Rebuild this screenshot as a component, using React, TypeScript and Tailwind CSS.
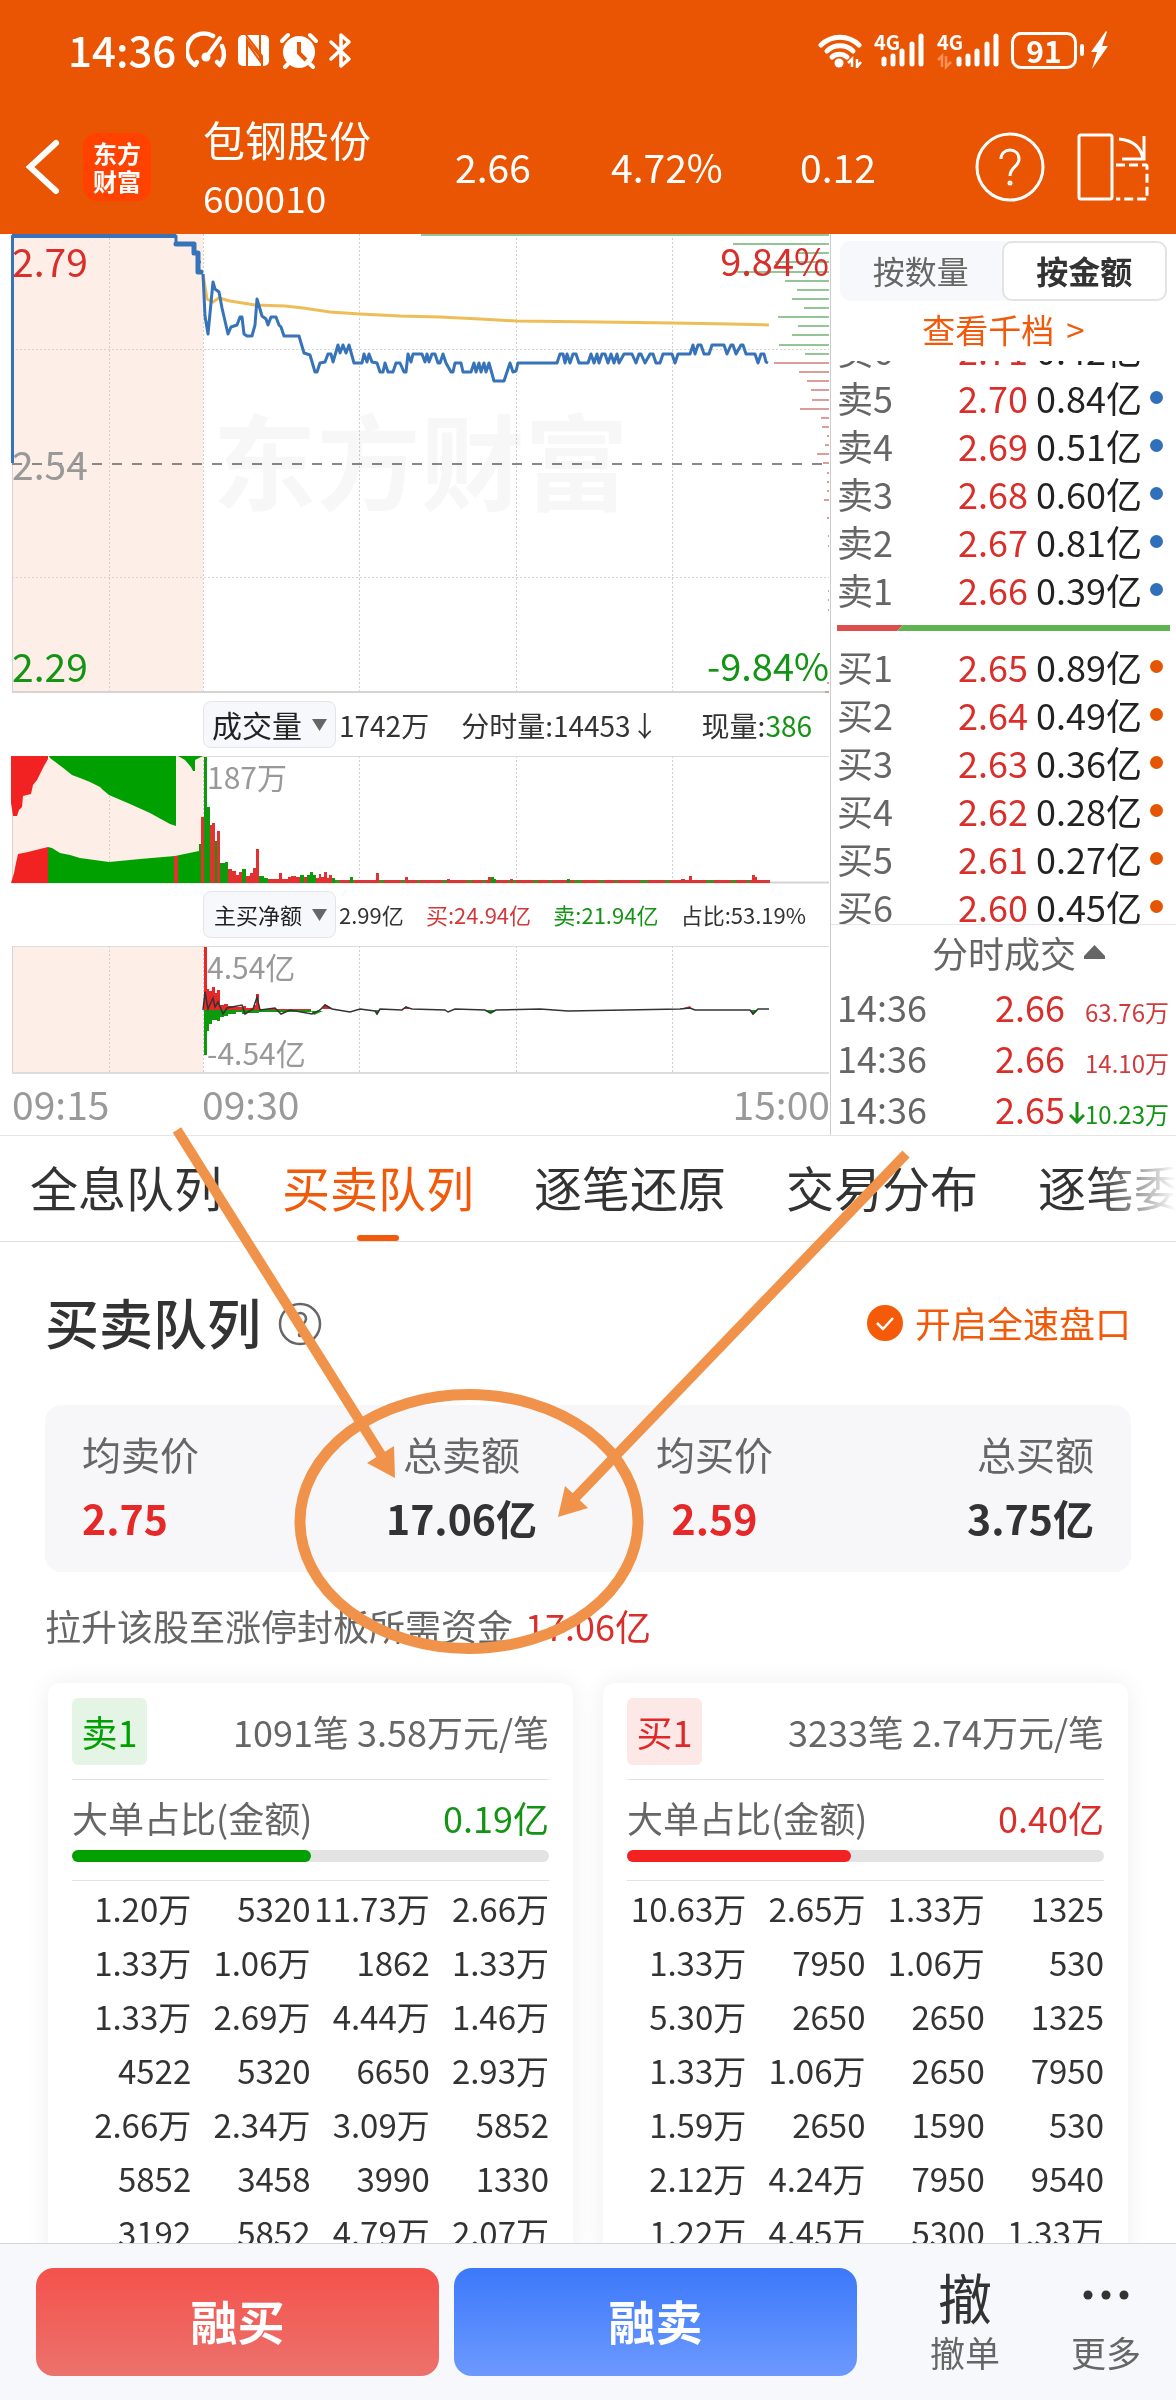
import { useState } from "react";

interface Level {
  label: string;
  price: string;
  amount: string;
}

interface Trade {
  time: string;
  price: string;
  amount: string;
  down?: boolean;
}

const sells: Level[] = [
  { label: "卖6", price: "2.71", amount: "0.42亿" },
  { label: "卖5", price: "2.70", amount: "0.84亿" },
  { label: "卖4", price: "2.69", amount: "0.51亿" },
  { label: "卖3", price: "2.68", amount: "0.60亿" },
  { label: "卖2", price: "2.67", amount: "0.81亿" },
  { label: "卖1", price: "2.66", amount: "0.39亿" },
];

const buys: Level[] = [
  { label: "买1", price: "2.65", amount: "0.89亿" },
  { label: "买2", price: "2.64", amount: "0.49亿" },
  { label: "买3", price: "2.63", amount: "0.36亿" },
  { label: "买4", price: "2.62", amount: "0.28亿" },
  { label: "买5", price: "2.61", amount: "0.27亿" },
  { label: "买6", price: "2.60", amount: "0.45亿" },
];

const trades: Trade[] = [
  { time: "14:36", price: "2.66", amount: "63.76万" },
  { time: "14:36", price: "2.66", amount: "14.10万" },
  { time: "14:36", price: "2.65", amount: "10.23万", down: true },
];

const tabs = ["全息队列", "买卖队列", "逐笔还原", "交易分布", "逐笔委托"];

const sellOrders = [
  ["1.20万", "5320", "11.73万", "2.66万"],
  ["1.33万", "1.06万", "1862", "1.33万"],
  ["1.33万", "2.69万", "4.44万", "1.46万"],
  ["4522", "5320", "6650", "2.93万"],
  ["2.66万", "2.34万", "3.09万", "5852"],
  ["5852", "3458", "3990", "1330"],
  ["3192", "5852", "4.79万", "2.07万"],
];

const buyOrders = [
  ["10.63万", "2.65万", "1.33万", "1325"],
  ["1.33万", "7950", "1.06万", "530"],
  ["5.30万", "2650", "2650", "1325"],
  ["1.33万", "1.06万", "2650", "7950"],
  ["1.59万", "2650", "1590", "530"],
  ["2.12万", "4.24万", "7950", "9540"],
  ["1.22万", "4.45万", "5300", "1.33万"],
];

const pricePoints =
  "203,275 205,317 208,335 213,283 215,290 219,293 222,309 228,335 231,328 237,326 240,318 242,318 244,335 247,337 252,337 255,326 257,300 262,317 266,320 268,326 271,318 276,318 279,326 281,328 284,337 299,337 304,354 310,356 315,373 317,373 320,364 325,363 328,355 331,355 333,363 338,346 340,354 343,346 346,354 349,346 354,364 362,364 364,355 367,363 369,355 372,363 377,364 380,373 383,373 385,364 388,373 393,373 396,364 400,364 404,373 406,373 408,355 411,363 413,355 422,355 425,363 427,355 429,363 432,355 435,355 438,364 440,364 443,355 446,364 451,373 453,373 455,364 461,364 463,373 471,373 474,364 476,373 479,364 481,373 484,364 486,373 489,364 494,382 504,382 510,364 513,373 516,372 518,364 557,364 560,355 563,355 565,364 567,355 570,364 573,355 576,355 579,364 588,364 591,355 594,364 597,355 599,364 602,355 605,355 608,364 611,355 614,364 617,355 619,364 624,355 632,355 636,364 639,355 641,355 645,364 650,355 653,355 656,364 660,364 663,355 672,355 675,364 678,355 690,355 693,346 695,355 698,346 701,346 704,355 709,355 712,346 724,346 727,355 731,346 733,346 736,355 741,346 743,346 746,355 755,355 758,364 761,355 764,355 766,363 768,364";

const averagePoints =
  "203,275 207,300 213,303 219,299 230,302 255,306 285,307 303,309 330,313 360,315 400,317 440,318 480,320 516,322 600,323 672,324 730,325 769,326";

// price distribution at the right edge: [y, start x]
const lossBars = [
  [236, 421], [245, 733], [254, 797], [263, 775], [273, 737], [282, 785], [291, 797],
  [300, 792], [309, 804], [318, 778], [327, 798], [336, 792], [346, 779], [355, 805],
];
const profitBars = [
  [364, 774], [373, 799], [382, 807], [391, 811], [401, 812], [410, 800], [419, 821],
  [428, 822], [437, 827], [446, 825], [455, 817], [464, 823], [474, 827], [483, 827],
  [492, 827], [501, 824], [519, 827], [537, 828], [547, 828], [592, 828], [601, 828],
  [611, 828], [684, 827], [693, 825],
];

// volume bars: [x, width, top, up]
const volumeBars: [number, number, number, boolean][] = [
  [174, 4, 856, true], [201, 3, 817, true], [204, 3, 757, false], [207, 3, 807, false],
  [210, 2, 825, true], [212, 3, 823, true], [215, 2, 841, false], [217, 3, 831, true],
  [220, 5, 863, false], [225, 3, 862, false], [228, 4, 869, true], [232, 4, 871, true],
  [236, 3, 875, true], [239, 3, 872, true], [242, 4, 869, false], [246, 4, 876, true],
  [250, 3, 873, true], [253, 3, 868, true], [256, 3, 849, true], [259, 5, 876, false],
  [264, 4, 878, false], [268, 11, 879, true], [279, 3, 873, true], [282, 6, 879, true],
  [288, 3, 877, true], [291, 5, 876, true], [296, 4, 877, true], [300, 4, 875, false],
  [304, 3, 877, true], [307, 3, 875, false], [310, 3, 872, false], [313, 3, 875, false],
  [316, 3, 878, true], [319, 2, 874, true], [321, 3, 877, true], [324, 3, 872, true],
  [327, 2, 878, true], [329, 3, 875, true], [332, 3, 878, false], [350, 3, 877, false],
  [376, 3, 873, true], [405, 3, 877, true], [447, 3, 879, true], [488, 3, 877, true],
  [491, 3, 877, false], [494, 2, 879, false], [510, 3, 879, true], [567, 3, 879, false],
  [681, 4, 879, true], [689, 3, 876, true], [752, 3, 875, true], [755, 2, 877, true],
];

// active buy and sell amounts per minute: [x, width, top, bottom]
const netBars = [
  [204, 3, 947, 1055], [207, 2, 989, 1031], [209, 3, 991, 1024], [212, 3, 987, 1020],
  [215, 2, 993, 1020], [217, 3, 990, 1021], [220, 4, 1005, 1017], [224, 4, 1004, 1016],
  [228, 8, 1006, 1014], [236, 6, 1007, 1012], [242, 4, 1006, 1014], [246, 8, 1008, 1013],
  [254, 2, 1005, 1013], [256, 3, 994, 1013], [259, 12, 1009, 1012], [271, 40, 1009, 1012],
];

const netLine =
  "203,1010 205,992 208,1009 213,998 215,1007 218,1002 223,1014 227,1008 242,1005 245,1014 253,1009 257,997 260,1010 275,1008 281,1014 290,1010 312,1014 320,1010 325,1005 332,1009 350,1012 360,1009 375,1011 377,1014 380,1009 402,1010 406,1007 412,1009 445,1010 448,1012 455,1009 485,1010 490,1013 496,1010 540,1009 568,1011 625,1010 680,1009 690,1008 695,1010 750,1010 753,1014 758,1009 769,1009";

function TimeGrid({ top, bottom }: { top: number; bottom: number }) {
  return (
    <>
      <rect x="12" y={top} width="191" height={bottom - top} fill="#fdeee7" />
      <g stroke="#cfcfcf" strokeDasharray="2 2">
        {[109, 203, 359, 516, 672].map((x) => (
          <path key={x} d={`M${x}.5 ${top}V${bottom}`} />
        ))}
      </g>
      <path d={`M12.5 ${top}V${bottom}`} stroke="#d4d4d4" />
    </>
  );
}

function PriceChart() {
  return (
    <div className="relative mr-px ml-3 h-[459px]">
      <span className="absolute inset-x-0 top-[152px] text-center text-[104px] leading-[144px] font-bold text-[#f7f7f7]">
        东方财富
      </span>
      <svg
        className="absolute inset-0 h-full w-full overflow-visible mix-blend-multiply"
        viewBox="12 235 817 459"
        preserveAspectRatio="none"
        fill="none"
      >
        <TimeGrid top={235} bottom={693} />
        <path d="M12 350.5H829M12 578.5H829" stroke="#d4d4d4" strokeDasharray="2 2" />
        <path d="M12 465H829" stroke="#888" strokeWidth="2" strokeDasharray="10 10" />
        <path d="M12 693H829" stroke="#d4d4d4" strokeWidth="2" />
        {lossBars.map(([y, x]) => (
          <path key={y} d={`M${x} ${y}H829`} stroke="#93c596" strokeWidth="2" />
        ))}
        {profitBars.map(([y, x]) => (
          <path key={y} d={`M${x} ${y}H829`} stroke="#dd9b99" strokeWidth="2" />
        ))}
        <polyline points={averagePoints} stroke="#efbd58" strokeWidth="3" />
        <g stroke="#3673b8" strokeLinejoin="round">
          <path d="M12.5 464V237H176V245" strokeWidth="3" />
          <path d="M12 237H176" strokeWidth="4" />
          <path
            d="M176 245H193M194 245V254M194 254H198M198 254V273M198 263H198.5M199 273H201"
            strokeWidth="5"
            strokeLinecap="round"
          />
          <polyline points={pricePoints} strokeWidth="3" />
        </g>
      </svg>
      <span className="absolute top-[3px] left-0 text-[39px] leading-[46px] text-[#d92e2a]">2.79</span>
      <span className="absolute top-[206px] left-0 text-[39px] leading-[46px] text-[#999]">2.54</span>
      <span className="absolute top-[408px] left-0 text-[39px] leading-[46px] text-[#149414]">2.29</span>
      <span className="absolute top-[3px] right-0 text-[38px] leading-[46px] text-[#d92e2a]">9.84%</span>
      <span className="absolute top-[408px] right-0 text-[38px] leading-[46px] text-[#149414]">-9.84%</span>
    </div>
  );
}

function VolumeChart() {
  return (
    <div className="relative mr-px ml-3 h-[127px]">
      <svg
        className="absolute inset-0 h-full w-full overflow-visible"
        viewBox="12 756 817 127"
        preserveAspectRatio="none"
        fill="none"
      >
        <TimeGrid top={756} bottom={882} />
        <path d="M12 756.5H829" stroke="#dcdcdc" />
        <path d="M12 882.5H829" stroke="#d4d4d4" strokeWidth="2" />
        <g fill="#f22222">
          <path d="M11 756H48V759L44 766 40 774 37 780 33 785 31 794 23 796 22 807 19 810 17 816 13 816 11 803Z" />
          <path d="M11 883L14 873 16 863 18 854 28 852 48 847V883Z" />
        </g>
        <g fill="#00a000">
          <path d="M49 756H176V826L170 824 150 813 130 804 109 795 103 790 100 787 90 782 80 778 72 775 62 767 58 764 50 758Z" />
          <path d="M178 756H203L199 758 195 760V771H193L191 767 185 760Z" />
          <path d="M48 847L52 848 60 853 70 855 80 858 109 862 140 859 175 856 199 851V844H201V883H48Z" />
        </g>
        <path d="M204 881.5H770" stroke="#d93636" strokeWidth="3" />
        <path d="M335 881.5H770" stroke="#4c8a1c" strokeWidth="3" strokeDasharray="5 11 3 22 8 17" />
        {volumeBars.map(([x, w, top, up]) => (
          <rect key={x} x={x} y={top} width={w} height={883 - top} fill={up ? "#e33030" : "#0d9a0d"} />
        ))}
      </svg>
      <span className="absolute top-0.5 left-[195px] text-[30px] leading-9 text-[#999]">187万</span>
    </div>
  );
}

function NetChart() {
  return (
    <div className="relative mr-px ml-3 h-[127px]">
      <svg
        className="absolute inset-0 h-full w-full overflow-visible"
        viewBox="12 946 817 127"
        preserveAspectRatio="none"
        fill="none"
      >
        <TimeGrid top={946} bottom={1073} />
        <path d="M12 946.5H829" stroke="#dcdcdc" />
        <path d="M12 1073H829" stroke="#dcdcdc" strokeWidth="2" />
        {netBars.map(([x, w, top, bottom]) => (
          <g key={x}>
            <rect x={x} y={top} width={w} height={1010 - top} fill="#e62828" />
            <rect x={x} y="1010" width={w} height={bottom - 1010} fill="#0d9a0d" />
          </g>
        ))}
        <path d="M322 1009L325 1004 333 1009ZM402 1009L406 1006 410 1009ZM680 1009L690 1006 692 1009Z" fill="#e62828" />
        <path d="M311 1011H323L314 1015ZM375 1010L377 1015 380 1010ZM486 1010L491 1014 497 1010ZM750 1010L753 1015 758 1010Z" fill="#0d9a0d" />
        <polyline points={netLine} stroke="#333" strokeWidth="1.5" />
      </svg>
      <span className="absolute top-0.5 left-[195px] text-[30px] leading-9 text-[#999]">4.54亿</span>
      <span className="absolute top-[88px] left-[195px] text-[30px] leading-9 text-[#999]">-4.54亿</span>
    </div>
  );
}

function IndicatorSelect({ name, small }: { name: string; small?: boolean }) {
  return (
    <div className="relative ml-[203px] h-[47px] w-[133px] shrink-0">
      <select
        aria-label={name}
        className={`h-full w-full appearance-none rounded-lg border border-[#e3e5e9] bg-[#f7f8fb] text-[#222] ${
          small ? "pl-[10px] text-[22px]" : "pl-2 text-[30px]"
        }`}
      >
        <option>{name}</option>
      </select>
      <svg className="pointer-events-none absolute top-[18px] right-[9px]" width="15" height="12">
        <path d="M0 0H15L7.5 12Z" fill="#666" />
      </svg>
    </div>
  );
}

function LevelRow({ level, dot }: { level: Level; dot: string }) {
  return (
    <li className="flex h-12 shrink-0 items-center pr-[13px] pl-[6px] text-[36px] leading-[44px] text-[#222]">
      <span className="flex-1 text-[#666]">{level.label}</span>
      <span className="text-[#d92e2a]">{level.price}</span>
      <span className="ml-2">{level.amount}</span>
      <i className={`ml-2 size-[13px] rounded-full ${dot}`} />
    </li>
  );
}

function OrderBook() {
  const [mode, setMode] = useState("按金额");

  return (
    <aside className="flex h-[901px] w-[346px] shrink-0 flex-col border-l border-[#ccc]">
      <div className="mx-[9px] mt-[7px] flex h-[60px] rounded-[10px] bg-[#f7f8fb]">
        {["按数量", "按金额"].map((item) => (
          <button
            key={item}
            onClick={() => setMode(item)}
            className={`flex-1 rounded-[10px] pb-0.5 text-[32px] leading-10 ${
              mode === item ? "border-2 border-[#e3e3e3] bg-white font-bold text-[#333]" : "text-[#666]"
            }`}
          >
            {item}
          </button>
        ))}
      </div>
      <a href="#levels" className="mt-2 flex justify-center gap-3 text-[33px] leading-10 text-[#f05a0a]">
        <span>查看千档</span>
        <span>&gt;</span>
      </a>
      <ul className="mt-3 flex h-[252px] flex-col justify-end overflow-hidden">
        {sells.map((level) => (
          <LevelRow key={level.label} level={level} dot="bg-[#3070bb]" />
        ))}
      </ul>
      <svg className="mx-[6px] mt-3 h-[6px] shrink-0" viewBox="0 0 333 6" preserveAspectRatio="none">
        <path d="M0 0H66L60 6H0Z" fill="#dd4f4c" />
        <path d="M66 0H333V6H60Z" fill="#5fb450" />
      </svg>
      <ul className="mt-[11px] flex h-[283px] flex-col overflow-hidden border-b border-[#e6e6e6]">
        {buys.map((level) => (
          <LevelRow key={level.label} level={level} dot="bg-[#e65503]" />
        ))}
      </ul>
      <button className="flex h-[56px] items-center justify-center gap-2 pb-0.5 pl-[30px] text-[36px] leading-[44px] text-[#666]">
        分时成交
        <svg width="21" height="14">
          <path d="M10.5 0L21 11V14H0V11Z" fill="#666" />
        </svg>
      </button>
      <ul>
        {trades.map((trade, i) => (
          <li key={i} className="flex h-[51px] items-baseline pr-[7px] pl-[6px] text-[36px] leading-[51px]">
            <span className="flex-1 text-[#666]">{trade.time}</span>
            <span className="text-[#d92e2a]">{trade.price}</span>
            <span
              className={`flex w-[104px] items-baseline justify-end text-[24px] ${
                trade.down ? "text-[#149414]" : "text-[#d03a3a]"
              }`}
            >
              {trade.down && (
                <svg width="16" height="22" fill="none" stroke="currentColor" strokeWidth="3">
                  <path d="M8 0V20M1 13L8 20 15 13" />
                </svg>
              )}
              {trade.amount}
            </span>
          </li>
        ))}
      </ul>
    </aside>
  );
}

function SignalBars({ faded }: { faded?: boolean }) {
  return (
    <svg
      className="overflow-visible"
      width={faded ? 64 : 51}
      height="36"
      viewBox={faded ? "0 0 64 36" : "0 0 51 36"}
    >
      <text x="0" y="18" fontSize="20" fontWeight="700" fill="#fff">
        4G
      </text>
      <g stroke="#fff" strokeWidth="5" strokeLinecap="round">
        {faded ? (
          <path d="M22 32V27M31 32V24M40 32V19M50 32V12M59 32V4" />
        ) : (
          <path d="M10 32V27M19 32V24M28 32V19M38 32V12M47 32V4" />
        )}
      </g>
      {faded && (
        <path d="M1 28L5 24V35M9 24V35L14 30" fill="none" stroke="#ff8f57" strokeWidth="2.5" />
      )}
    </svg>
  );
}

function StatusBar() {
  return (
    <div className="flex h-[100px] items-center px-[68px] text-white">
      <span className="pb-0.5 text-[42px] leading-[56px] font-medium">14:36</span>
      <svg className="ml-[10px]" width="166" height="38" viewBox="0 0 166 38" fill="none">
        <g stroke="#fff" strokeWidth="4.5" strokeLinecap="round">
          <path d="M9 34A17 17 0 0 1 27 5" />
          <path d="M36 15A17 17 0 0 1 34 34M9 34L11 31M34 34L31 31" />
          <path d="M21 25L34 7" strokeWidth="4" />
        </g>
        <circle cx="20" cy="26" r="4.5" fill="#fff" />
        <rect x="52" y="4" width="31" height="31" rx="5" fill="#fff" />
        <path d="M61 35V9L75 27M74 4V30L61 12M60 4L76 25V35" stroke="#e95503" strokeWidth="2" />
        <circle cx="113" cy="21" r="16" fill="#fff" />
        <path d="M96 10L102 4M130 10L124 4M102 33L99 36M124 33L127 36" stroke="#fff" strokeWidth="4" strokeLinecap="round" />
        <path d="M113 11V22L120 29" stroke="#e95503" strokeWidth="4" />
        <path d="M145 11L163 28 155 35V4L163 11 145 28" stroke="#fff" strokeWidth="3.5" strokeLinejoin="round" strokeLinecap="round" />
      </svg>
      <svg className="ml-auto" width="44" height="36" viewBox="0 0 44 36" fill="none">
        <g stroke="#fff" strokeWidth="5" strokeLinecap="round">
          <path d="M3 13A27 27 0 0 1 41 13" />
          <path d="M9 19A19 19 0 0 1 35 19" />
          <path d="M14 25A12 12 0 0 1 29 25" />
        </g>
        <circle cx="21" cy="31" r="4.5" fill="#fff" />
        <path d="M30 31L34 27V35M39 27V35L43 30" stroke="#fff" strokeWidth="2.5" />
      </svg>
      <div className="ml-3 flex items-center gap-3">
        <SignalBars />
        <SignalBars faded />
      </div>
      <div className="ml-[10px] flex h-[37px] w-[66px] items-center justify-center rounded-[10px] border-3 border-white text-[30px] leading-[30px] font-bold">
        91
      </div>
      <span className="ml-[3px] h-3 w-1 rounded-sm bg-white" />
      <svg className="ml-[7px]" width="17" height="38">
        <path d="M15 0L0 21H6L1 38 17 15H11L16 1Z" fill="#fff" />
      </svg>
    </div>
  );
}

function StockHeader() {
  return (
    <div className="flex h-[134px] items-center pr-[26px] pl-[25px] text-white">
      <button aria-label="返回">
        <svg width="36" height="58" viewBox="0 0 36 58" fill="none" stroke="#fff" strokeWidth="6" strokeLinecap="round">
          <path d="M31 5L5 29 31 53" />
        </svg>
      </button>
      <div className="ml-[22px] flex size-[68px] flex-col items-center justify-center rounded-[14px] bg-[#ff4200] text-[24px] leading-7 font-bold">
        <span>东方</span>
        <span>财富</span>
      </div>
      <div className="ml-[52px] w-[252px] pt-0.5">
        <h1 className="text-[42px] leading-[58px]">包钢股份</h1>
        <p className="text-[37px] leading-[58px]">600010</p>
      </div>
      <span className="w-[156px] pb-0.5 text-[39px]">2.66</span>
      <span className="w-[189px] pb-0.5 text-[39px]">4.72%</span>
      <span className="pb-0.5 text-[39px]">0.12</span>
      <button aria-label="帮助" className="ml-auto">
        <svg width="70" height="70" viewBox="0 0 70 70" fill="none" stroke="#fff" strokeWidth="3">
          <circle cx="35" cy="35" r="33" />
          <path d="M26 27C26 15 44 15 44 27C44 35 35 35 35 44" />
          <circle cx="35" cy="51" r="1" />
        </svg>
      </button>
      <button aria-label="横屏" className="ml-8">
        <svg width="73" height="68" viewBox="0 0 73 68" fill="none" stroke="#fff" strokeWidth="3">
          <rect x="2" y="2" width="33" height="64" rx="2" />
          <path d="M42 6Q63 8 66 26M67 3V26H45" />
          <path d="M39 32H69Q70 32 70 34V66H39" strokeDasharray="9 4" />
        </svg>
      </button>
    </div>
  );
}

function QueueCard({
  side,
  summary,
  amount,
  ratio,
  orders,
}: {
  side: string;
  summary: string;
  amount: string;
  ratio: number;
  orders: string[][];
}) {
  const isSell = side.startsWith("卖");

  return (
    <section className="flex-1 rounded-xl bg-white px-6 pt-[15px] shadow-[0_0_24px_rgba(0,0,0,0.07)]">
      <div className="flex h-[82px] items-start justify-between border-b border-[#e3e3e3]">
        <span
          className={`flex h-[67px] w-[75px] items-center justify-center rounded-md pb-0.5 text-[36px] ${
            isSell ? "bg-[#e5f5e5] text-[#00a000]" : "bg-[#fde8e8] text-[#e02828]"
          }`}
        >
          {side}
        </span>
        <span className="text-[36px] leading-[66px] text-[#666]">{summary}</span>
      </div>
      <div className="border-b border-[#e3e3e3] pt-[10px] pb-[18px]">
        <div className="flex justify-between text-[36px] leading-[54px]">
          <span className="text-[#666]">大单占比(金额)</span>
          <span className={isSell ? "text-[#149414]" : "text-[#d92e2a]"}>{amount}</span>
        </div>
        <div className="mt-[6px] h-3 rounded-full bg-[#e3e3e3]">
          <div
            className={`h-full rounded-full ${isSell ? "bg-[#00a000]" : "bg-[#f22222]"}`}
            style={{ width: `${ratio}%` }}
          />
        </div>
      </div>
      <table className="w-full table-fixed text-right text-[33px] leading-[54px] text-[#333]">
        <tbody>
          {orders.map((row, i) => (
            <tr key={i} className="h-[54px]">
              {row.map((cell, j) => (
                <td key={j} className="p-0 whitespace-nowrap">
                  {cell}
                </td>
              ))}
            </tr>
          ))}
        </tbody>
      </table>
    </section>
  );
}

// hand-drawn marks pointing at the total sell amount
function Annotation() {
  return (
    <svg
      className="pointer-events-none absolute inset-x-0 top-[893px] h-[540px] w-full"
      viewBox="0 1127 1176 540"
      preserveAspectRatio="none"
      fill="none"
      stroke="#f0924a"
      strokeWidth="10"
    >
      <ellipse cx="469" cy="1521.5" rx="169" ry="127" strokeWidth="11" />
      <path d="M177 1130L383 1458" />
      <path d="M906 1154L575 1498" />
      <path d="M395 1478L367 1463 394 1446ZM558 1517L565 1486 588 1508Z" fill="#f0924a" stroke="none" />
    </svg>
  );
}

export default function App() {
  const [tab, setTab] = useState("买卖队列");

  return (
    <div className="flex h-screen flex-col bg-white font-['Noto_Sans_CJK_SC',sans-serif]">
      <header className="shrink-0 bg-[#e95503]">
        <StatusBar />
        <StockHeader />
      </header>

      <main className="relative min-h-0 flex-1 overflow-y-auto [scrollbar-width:none]">
        <div className="flex border-b border-[#e4e4e4]">
          <div className="min-w-0 flex-1">
            <PriceChart />
            <div className="flex h-[63px] items-center text-[28px] whitespace-nowrap text-[#333]">
              <IndicatorSelect name="成交量" />
              <span className="ml-[3px]">1742万</span>
              <span className="ml-8">分时量:14453↓</span>
              <span className="mr-[18px] ml-auto">
                现量:<span className="text-[#149414]">386</span>
              </span>
            </div>
            <VolumeChart />
            <div className="flex h-[63px] items-center text-[22px] whitespace-nowrap text-[#333]">
              <IndicatorSelect name="主买净额" small />
              <div className="mr-6 ml-[3px] flex flex-1 justify-between">
                <span>2.99亿</span>
                <span className="text-[#d03a3a]">买:24.94亿</span>
                <span className="text-[#149414]">卖:21.94亿</span>
                <span>占比:53.19%</span>
              </div>
            </div>
            <NetChart />
            <div className="flex h-[62px] items-center pb-0.5 pl-3 text-[39px] text-[#999]">
              <span className="w-[190px]">09:15</span>
              <span>09:30</span>
              <span className="ml-auto">15:00</span>
            </div>
          </div>
          <OrderBook />
        </div>

        <nav className="relative flex h-[106px] items-center gap-[60px] overflow-hidden border-b border-[#e0e0e0] pl-[30px]">
          {tabs.map((item) => (
            <button
              key={item}
              onClick={() => setTab(item)}
              className={`relative h-full shrink-0 pb-[5px] text-[48px] leading-[60px] ${
                tab === item ? "text-[#f05a0a]" : "text-[#333]"
              }`}
            >
              {item}
              {tab === item && (
                <i className="absolute bottom-0 left-[75px] h-[6px] w-[42px] rounded-full bg-[#f05a0a]" />
              )}
            </button>
          ))}
          <div className="pointer-events-none absolute inset-y-0 right-0 w-20 bg-linear-to-r from-transparent to-white" />
        </nav>

        <div className="px-[45px]">
          <div className="flex h-[163px] items-center">
            <h2 className="pb-1 text-[54px] leading-[64px] font-medium text-[#333]">买卖队列</h2>
            <button aria-label="说明" className="ml-[17px]">
              <svg width="44" height="44" viewBox="0 0 44 44" fill="none" stroke="#666" strokeWidth="2.5">
                <circle cx="22" cy="22" r="20" />
                <path d="M16 18C16 9 28 9 28 17C28 22 22 22 22 28" />
                <circle cx="22" cy="33" r="1" />
              </svg>
            </button>
            <button className="ml-auto flex items-center gap-3 pb-0.5 text-[36px] leading-[44px] text-[#f05a0a]">
              <svg width="36" height="36" viewBox="0 0 36 36" fill="none">
                <circle cx="18" cy="18" r="18" fill="#f55a08" />
                <path d="M10 18L16 24 26 13" stroke="#fff" strokeWidth="2.5" />
              </svg>
              <span className="pb-0.5">开启全速盘口</span>
            </button>
          </div>

          <dl className="grid h-[167px] grid-cols-4 rounded-2xl bg-[#f7f7f9] px-[37px] pt-[18px]">
            <div>
              <dt className="text-[39px] leading-[60px] text-[#666]">均卖价</dt>
              <dd className="text-[41px] leading-[68px] font-bold text-[#e62828]">2.75</dd>
            </div>
            <div className="text-center">
              <dt className="text-[39px] leading-[60px] text-[#666]">总卖额</dt>
              <dd className="text-[41px] leading-[68px] font-bold text-[#333]">17.06亿</dd>
            </div>
            <div className="text-center">
              <dt className="text-[39px] leading-[60px] text-[#666]">均买价</dt>
              <dd className="text-[41px] leading-[68px] font-bold text-[#e62828]">2.59</dd>
            </div>
            <div className="text-right">
              <dt className="text-[39px] leading-[60px] text-[#666]">总买额</dt>
              <dd className="text-[41px] leading-[68px] font-bold text-[#333]">3.75亿</dd>
            </div>
          </dl>

          <p className="flex h-[111px] items-center gap-3 pb-[5px] text-[36px] text-[#666]">
            拉升该股至涨停封板所需资金
            <span className="text-[#d92e2a]">17.06亿</span>
          </p>

          <div className="flex gap-[30px] px-[3px]">
            <QueueCard
              side="卖1"
              summary="1091笔 3.58万元/笔"
              amount="0.19亿"
              ratio={50}
              orders={sellOrders}
            />
            <QueueCard
              side="买1"
              summary="3233笔 2.74万元/笔"
              amount="0.40亿"
              ratio={47}
              orders={buyOrders}
            />
          </div>
        </div>
        <Annotation />
      </main>

      <footer className="flex shrink-0 items-center border-t border-[#d4d6da] bg-[#f7f8fb] py-6 pr-[34px] pl-9">
        <div className="flex flex-1 gap-[15px]">
          <button className="h-[108px] flex-1 rounded-[18px] bg-linear-to-b from-[#f4514b] to-[#ec716c] pb-1 text-[47px] font-bold text-white">
            融买
          </button>
          <button className="h-[108px] flex-1 rounded-[18px] bg-linear-to-b from-[#3c78fa] to-[#6c99fe] pb-1 text-[47px] font-bold text-white">
            融卖
          </button>
        </div>
        <button className="ml-[72px] flex w-[72px] flex-col items-center text-[35px] leading-[46px] text-[#666]">
          <span className="mb-1 text-[54px] leading-[56px] text-[#333]">撤</span>
          撤单
        </button>
        <button className="ml-[69px] flex w-[72px] flex-col items-center text-[35px] leading-[46px] text-[#666]">
          <svg className="mb-1" width="46" height="56" fill="#333">
            <circle cx="5" cy="26" r="4.5" />
            <circle cx="23" cy="26" r="4.5" />
            <circle cx="41" cy="26" r="4.5" />
          </svg>
          更多
        </button>
      </footer>
    </div>
  );
}
